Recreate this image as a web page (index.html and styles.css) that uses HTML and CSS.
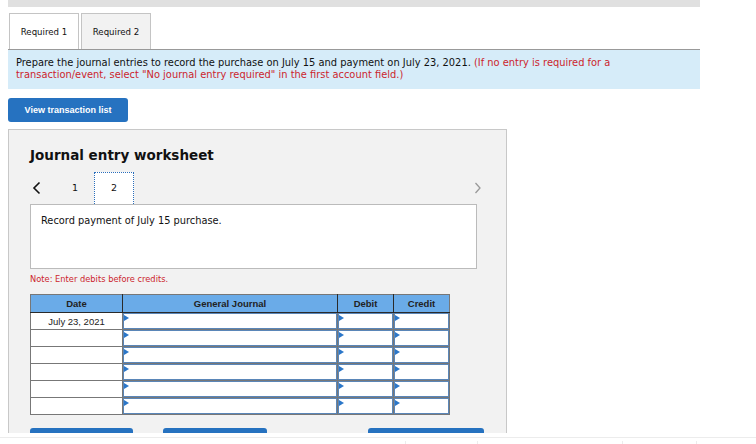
FILE: index.html
```html
<!DOCTYPE html>
<html lang="en">
<head>
    <meta charset="UTF-8">
    <title>Journal entry worksheet</title>
    <link rel="stylesheet" href="styles.css">
</head>
<body>
<div class="viewport">
    <div class="topbar"></div>
    <div class="tabs">
        <div class="tab active">Required 1</div>
        <div class="tab">Required 2</div>
    </div>
    <div class="instructions">
        Prepare the journal entries to record the purchase on July 15 and payment on July 23, 2021.
        <span class="red">(If no entry is required for a transaction/event, select "No journal entry required" in the first account field.)</span>
    </div>
    <button class="btn view_btn">View transaction list</button>

    <div class="worksheet">
        <h2 class="ws_title">Journal entry worksheet</h2>
        <div class="ws_nav">
            <svg class="arrow" width="10" height="14" viewBox="0 0 10 14">
                <path d="M7.5 1.5 L2 7 L7.5 12.5" fill="none" stroke="#111" stroke-width="1.6"/>
            </svg>
            <div class="step">1</div>
            <div class="step current">2</div>
            <svg class="arrow arrow_right" width="10" height="14" viewBox="0 0 10 14">
                <path d="M2.5 2 L7 7 L2.5 12" fill="none" stroke="#999" stroke-width="1.3"/>
            </svg>
        </div>
        <div class="ws_desc">Record payment of July 15 purchase.</div>
        <div class="note">Note: Enter debits before credits.</div>

        <table class="journal">
            <colgroup>
                <col style="width:92px">
                <col style="width:215px">
                <col style="width:56px">
                <col style="width:56px">
            </colgroup>
            <tr>
                <th>Date</th>
                <th>General Journal</th>
                <th>Debit</th>
                <th>Credit</th>
            </tr>
            <tr>
                <td class="date">July 23, 2021</td>
                <td><div class="field"><span class="tri"></span></div></td>
                <td><div class="field"><span class="tri"></span></div></td>
                <td><div class="field"><span class="tri"></span></div></td>
            </tr>
            <tr>
                <td class="date"></td>
                <td><div class="field"><span class="tri"></span></div></td>
                <td><div class="field"><span class="tri"></span></div></td>
                <td><div class="field"><span class="tri"></span></div></td>
            </tr>
            <tr>
                <td class="date"></td>
                <td><div class="field"><span class="tri"></span></div></td>
                <td><div class="field"><span class="tri"></span></div></td>
                <td><div class="field"><span class="tri"></span></div></td>
            </tr>
            <tr>
                <td class="date"></td>
                <td><div class="field"><span class="tri"></span></div></td>
                <td><div class="field"><span class="tri"></span></div></td>
                <td><div class="field"><span class="tri"></span></div></td>
            </tr>
            <tr>
                <td class="date"></td>
                <td><div class="field"><span class="tri"></span></div></td>
                <td><div class="field"><span class="tri"></span></div></td>
                <td><div class="field"><span class="tri"></span></div></td>
            </tr>
            <tr>
                <td class="date"></td>
                <td><div class="field"><span class="tri"></span></div></td>
                <td><div class="field"><span class="tri"></span></div></td>
                <td><div class="field"><span class="tri"></span></div></td>
            </tr>
        </table>

        <!-- buttons are cut off by the scroll area, labels are below the fold -->
        <div class="ws_buttons">
            <button class="btn ws_btn b1" aria-label="Record entry"></button>
            <button class="btn ws_btn b2" aria-label="Clear entry"></button>
            <button class="btn ws_btn b3" aria-label="View general journal"></button>
        </div>
    </div>
</div>
<div class="footer">
    <span class="sep s1"></span>
    <span class="sep s2"></span>
    <span class="sep s3"></span>
    <span class="sep s4"></span>
</div>
</body>
</html>
```

FILE: styles.css
```css
body {
    margin: 0;
    font-family: "DejaVu Sans", Verdana, sans-serif;
    color: #111;
    background: #fff;
}

.viewport {
    height: 433px;
    overflow: hidden;
    padding: 0 8px;
}

.topbar {
    width: 692px;
    height: 7px;
    background-color: #e0e0e0;
}

.tabs {
    display: flex;
    gap: 2px;
    margin-top: 6px;
    margin-left: 1px;
}

.tab {
    width: 68px;
    height: 35px;
    line-height: 36px;
    text-align: center;
    font-size: 8.6px;
    border: 1px solid #c4c4c4;
    border-bottom: none;
    background-color: #f2f2f2;
}

.tab.active {
    background-color: #fff;
}

.instructions {
    width: 612px;
    height: 32px;
    padding: 7px 72px 0 8px;
    border-top: 1px solid #999;
    background-color: #d6ecf9;
    font-size: 9.9px;
    line-height: 12px;
}

.red {
    color: #cc1f2d;
}

.btn {
    display: block;
    border: none;
    border-radius: 3px;
    background-color: #2672c0;
    color: #fff;
    font-family: "Liberation Sans", Arial, sans-serif;
    font-weight: bold;
    font-size: 9px;
    padding: 0;
}

.view_btn {
    width: 120px;
    height: 24px;
    margin-top: 9px;
}

.worksheet {
    width: 476px;
    margin-top: 7px;
    padding: 0 0 40px 21px;
    border: 1px solid #c8c8c8;
    background-color: #f2f2f2;
}

.ws_title {
    margin: 0;
    padding-top: 16px;
    font-size: 13.5px;
    line-height: 18px;
    font-weight: bold;
}

.ws_nav {
    display: flex;
    align-items: center;
    width: 447px;
    height: 32px;
    margin-top: 8px;
}

.arrow {
    margin-left: 2px;
}

.arrow_right {
    margin-left: auto;
    margin-right: -6px;
}

.step {
    width: 38px;
    height: 30px;
    line-height: 30px;
    text-align: center;
    font-size: 9.5px;
    margin-left: 14px;
}

.step.current {
    margin-left: 0;
    width: 38px;
    border: 1px dotted #2a6ebb;
    border-bottom: none;
    height: 31px;
    background-color: #fff;
}

.ws_desc {
    width: 425px;
    height: 63px;
    padding: 0 10px;
    border: 1px solid #bbb;
    background-color: #fff;
    font-size: 9.8px;
    line-height: 31px;
}

.note {
    margin-top: 4px;
    color: #cc1f2d;
    font-size: 8.3px;
    line-height: 12px;
}

.journal {
    margin-top: 9px;
    border-collapse: collapse;
    table-layout: fixed;
    width: 419px;
    font-family: "Liberation Sans", Arial, sans-serif;
    font-size: 9.5px;
}

.journal th {
    height: 17px;
    padding: 0;
    background-color: #6aabe8;
    border: 1px solid #2a2a2a;
    border-top-color: #777;
    color: #222;
    font-weight: bold;
}

.journal th:first-child {
    border-left-color: #777;
}

.journal th:last-child {
    border-right-color: #777;
}

.journal td {
    height: 16px;
    padding: 0;
    border: 1px solid #777;
    background-color: #fff;
}

.journal td.date {
    text-align: center;
    color: #222;
}

.field {
    position: relative;
    height: 14px;
    border: 1px solid #5a86b8;
    background-color: #fff;
}

.tri {
    position: absolute;
    left: 0;
    top: 1px;
    width: 0;
    height: 0;
    border-left: 5px solid #2b77c9;
    border-top: 3px solid transparent;
    border-bottom: 3px solid transparent;
}

.ws_buttons {
    display: flex;
    margin-top: 13px;
}

.ws_btn {
    height: 24px;
}

.b1 {
    width: 103px;
}

.b2 {
    width: 104px;
    margin-left: 30px;
}

.b3 {
    width: 116px;
    margin-left: 101px;
}

.footer {
    position: relative;
    margin-top: 4px;
    height: 7px;
    border-top: 1px solid #ececec;
}

.sep {
    position: absolute;
    top: 3px;
    width: 1px;
    height: 6px;
    background-color: #ececec;
}

.s1 { left: 405px; }
.s2 { left: 477px; }
.s3 { left: 622px; }
.s4 { left: 696px; }
```
